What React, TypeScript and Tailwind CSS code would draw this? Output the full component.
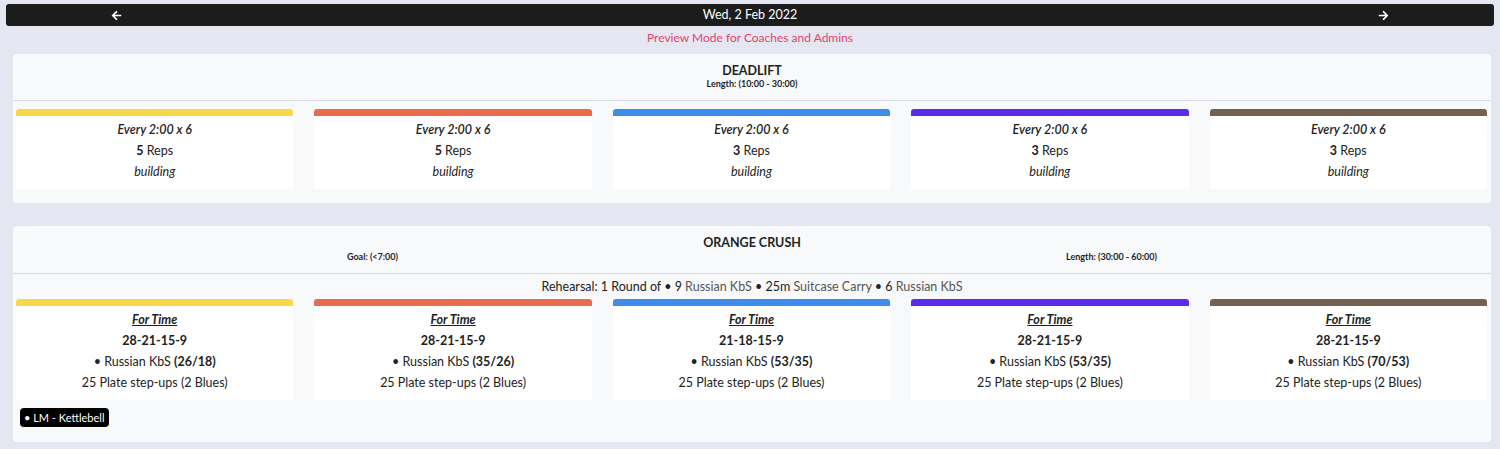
import React from 'react';
import { FaArrowLeft, FaArrowRight } from 'react-icons/fa';

const levelColors = ['bg-[#f8d84b]', 'bg-[#ea6c4e]', 'bg-[#3f8deb]', 'bg-[#5b2de8]', 'bg-[#75614f]'];

interface LevelCardProps {
  color: string;
  children: React.ReactNode;
}

const LevelCard: React.FC<LevelCardProps> = ({ color, children }) => (
  <div className="flex flex-col">
    <div className={`h-[7px] rounded-t-[3px] ${color}`} />
    <div className="bg-white pt-[3px] pb-[7px] flex flex-col items-center text-[12.5px] leading-[21px] text-[#222]">
      {children}
    </div>
  </div>
);

const deadlift = [
  { reps: 5 },
  { reps: 5 },
  { reps: 3 },
  { reps: 3 },
  { reps: 3 },
];

const crush = [
  { scheme: '28-21-15-9', weight: '26/18' },
  { scheme: '28-21-15-9', weight: '35/26' },
  { scheme: '21-18-15-9', weight: '53/35' },
  { scheme: '28-21-15-9', weight: '53/35' },
  { scheme: '28-21-15-9', weight: '70/53' },
];

const App: React.FC = () => {
  return (
    <div className="min-h-[449px] w-full bg-[#e4e6f1] pt-1 font-['Lato','Noto_Sans',sans-serif] text-[#1f1f1f]">
      <div className="mx-[6px] h-[22px] rounded-[3px] bg-[#1c1c1c] text-white flex items-center justify-between px-[105px]">
        <FaArrowLeft className="w-[11px] h-[11px]" />
        <span className="text-[12.5px]">Wed, 2 Feb 2022</span>
        <FaArrowRight className="w-[11px] h-[11px]" />
      </div>

      <div className="text-center text-[12px] leading-[22px] mt-[1px] text-[#e2456b]">
        Preview Mode for Coaches and Admins
      </div>

      <div className="ml-[13px] mr-[9px] mt-[5px] rounded-[4px] bg-[#f8f9fb] pb-[14px]">
        <div className="pt-[9px] pb-[10px] text-center">
          <div className="text-[12.5px] leading-[15px] font-bold">DEADLIFT</div>
          <div className="text-[9px] leading-[12px] font-bold">Length: (10:00 - 30:00)</div>
        </div>
        <div className="h-px bg-[#d5d7e4]" />
        <div className="grid grid-cols-5 gap-[21px] pl-[3px] pr-[4px] mt-[8px]">
          {deadlift.map((d, i) => (
            <LevelCard key={i} color={levelColors[i]}>
              <div className="italic font-semibold">Every 2:00 x 6</div>
              <div>
                <span className="font-bold">{d.reps}</span> Reps
              </div>
              <div className="italic">building</div>
            </LevelCard>
          ))}
        </div>
      </div>

      <div className="ml-[13px] mr-[9px] mt-[23px] rounded-[4px] bg-[#f8f9fb] pb-[15px]">
        <div className="pt-[9px] pb-[10px] text-center">
          <div className="text-[12.5px] leading-[15px] font-bold">ORANGE CRUSH</div>
          <div className="flex text-[9px] leading-[12px] font-bold mt-[1px] ml-[-10px] mr-[10px]">
            <div className="flex-1 text-center">Goal: (&lt;7:00)</div>
            <div className="flex-1 text-center">Length: (30:00 - 60:00)</div>
          </div>
        </div>
        <div className="h-px bg-[#d5d7e4]" />
        <div className="text-center text-[12.5px] leading-[21px] mt-[2px] text-[#222]">
          Rehearsal: 1 Round of • 9 <span className="text-[#555]">Russian KbS</span> • 25m{' '}
          <span className="text-[#555]">Suitcase Carry</span> • 6 <span className="text-[#555]">Russian KbS</span>
        </div>
        <div className="grid grid-cols-5 gap-[21px] pl-[3px] pr-[4px] mt-[2px]">
          {crush.map((c, i) => (
            <LevelCard key={i} color={levelColors[i]}>
              <div className="italic font-bold underline">For Time</div>
              <div className="font-bold">{c.scheme}</div>
              <div>
                • Russian KbS <span className="font-bold">({c.weight})</span>
              </div>
              <div>25 Plate step-ups (2 Blues)</div>
            </LevelCard>
          ))}
        </div>
        <div className="flex px-[7px] mt-[8px]">
          <span className="rounded-[4px] bg-black text-white text-[11px] leading-[19px] px-[4px]">
            • LM - Kettlebell
          </span>
        </div>
      </div>
    </div>
  );
};

export default App;
